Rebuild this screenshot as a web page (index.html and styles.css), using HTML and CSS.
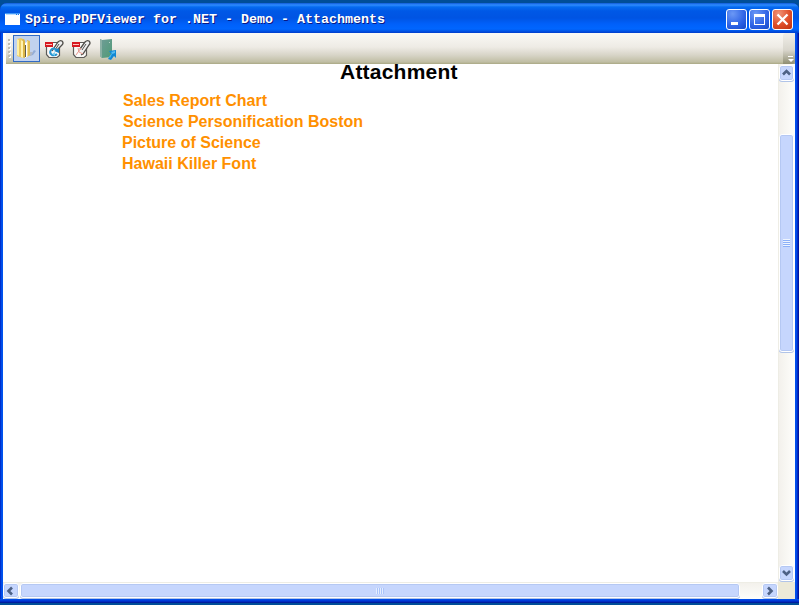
FILE: index.html
```
<!DOCTYPE html>
<html lang="en">
<head>
<meta charset="utf-8">
<title>Spire.PDFViewer for .NET - Demo - Attachments</title>
<link rel="stylesheet" href="styles.css">
</head>
<body>
<div class="window">
  <header class="titlebar">
    <svg class="app-icon" width="15" height="13" viewBox="0 0 15 13"><path fill="#fff" d="M0 0h15v12H0z"/><path fill="#4098f8" d="M0 0h15v1H0z"/><path fill="#b9dcff" d="M1 1h13v1H1z"/><path fill="#1675e8" d="M11 1h1v1h-1zM13 1h1v1h-1z"/></svg>
    <h1 class="title">Spire.PDFViewer for .NET - Demo - Attachments</h1>
    <div class="controls">
      <button class="control" aria-label="Minimize"><svg width="19" height="19"><path fill="#fff" d="M4 12h7v3H4z"/></svg></button>
      <button class="control" aria-label="Maximize"><svg width="19" height="19"><path fill="#fff" fill-rule="evenodd" d="M4 4h11v11H4zM5 7v7h9V7z"/></svg></button>
      <button class="control close" aria-label="Close"><svg width="19" height="19"><path stroke="#fff" stroke-width="2.3" d="M4.5 4.5l10 10M14.5 4.5l-10 10"/></svg></button>
    </div>
  </header>
  <div class="client">
    <div class="toolbar">
      <svg class="grip" width="4" height="20" viewBox="0 0 4 20"><g fill="#fff"><path d="M1 1h2v2H1zM1 5h2v2H1zM1 9h2v2H1zM1 13h2v2H1zM1 17h2v2H1z"/></g><g fill="#c0bdb2"><path d="M0 0h2v2H0zM0 4h2v2H0zM0 8h2v2H0zM0 12h2v2H0zM0 16h2v2H0z"/></g></svg>
      <button class="tool selected" aria-label="Open">
        <svg width="24" height="24" viewBox="0 0 24 24">
          <path fill="#93add8" d="M15 19l4-1 3-4-2-1-2 3h-3z"/><path fill="#b3b9c4" d="M15 15h4l-2 4h-2z"/>
          <path fill="#eccb64" d="M3 2l4-1 2 1v19l-6-2z"/><path fill="#fff0a5" d="M3 2l2 1v16l-2-1z"/>
          <path fill="#dcb647" d="M7 3l3-1 1 2v17l-4-1z"/><path fill="#fff2af" d="M7 3l2 1v17l-2-1z"/>
          <path fill="#fff" d="M11 6l2-1v15l-2 1z"/><path fill="#655d46" d="M11 8h1v12h-1z"/>
          <path fill="#e2bf58" d="M13 3l3 1v14l-3 2z"/><path fill="#fae28a" d="M13 4h1v16h-1z"/>
        </svg>
      </button>
      <button class="tool" aria-label="Save attachment">
        <svg width="20" height="20" viewBox="0 0 20 20">
          <path fill="#faf9f7" stroke="#5d5b58" stroke-width="1.200" d="M2.500 3.500v12l2.500 3h8l2.500-2v-13z"/>
          <path fill="#eee" stroke="#504e4a" stroke-width="1.300" d="M8 12l6-9q2-2 4-1 2 2 0 4l-5 5"/><path fill="none" stroke="#504e4a" d="M11 11l4-6"/>
          <path fill="#d71920" d="M1 3h8v5H1z"/><path fill="#ffc3bc" d="M2 5h6v1H2z"/>
          <path fill="none" stroke="#2795d0" stroke-width="2" d="M13 11q-4-3-6 0-2 3 1 5 3 1 5-1"/><path fill="#1686c8" d="M10 12l5-3v5z"/><path fill="#78cdf0" d="M8 15l3-2v4z"/>
        </svg>
      </button>
      <button class="tool" aria-label="Delete attachment">
        <svg width="20" height="20" viewBox="0 0 20 20">
          <path fill="#faf9f7" stroke="#5d5b58" stroke-width="1.200" d="M2.500 3.500v12l2.500 3h8l2.500-2v-13z"/>
          <path fill="#eee" stroke="#504e4a" stroke-width="1.300" d="M9 10l5-7q2-2 4-1 2 2 0 4l-6 9-2 1"/><path fill="none" stroke="#504e4a" d="M11 11l4-6"/>
          <path fill="#d71920" d="M1 3h8v5H1z"/><path fill="#ffc3bc" d="M2 5h6v1H2z"/>
          <path fill="none" stroke="#e8968d" d="M5 16l5-7M7 9l1 4 4 2"/>
        </svg>
      </button>
      <button class="tool" aria-label="Exit">
        <svg width="20" height="22" viewBox="0 0 20 22">
          <defs><linearGradient id="door" x2="1" y2="1"><stop stop-color="#719c98"/><stop offset="1" stop-color="#4f9b76"/></linearGradient></defs>
          <path fill="url(#door)" d="M2 1l2 1 10-1v18l-10 1-2-2z"/><path fill="#8cb0a5" d="M2 1l2 1v18l-2-2z"/><path fill="#b5d2c8" d="M11 4h1v1h-1z"/>
          <path fill="#1188d4" d="M11 13l7-1v8l-2-2-3 4-3-1 3-5z"/><path fill="#54bdf0" d="M13 14l4-1v2l-3 1-2 4-1-1 3-4z"/>
        </svg>
      </button>
      <span class="overflow"><svg width="7" height="8"><path fill="#fff" d="M1 1h5v1H1zM1 4h6L4 7z"/></svg></span>
    </div>
    <div class="viewer">
      <main class="page">
        <h2 class="heading">Attachment</h2>
        <ul class="attachments">
          <li>Sales Report Chart</li>
          <li>Science Personification Boston</li>
          <li class="outset">Picture of Science</li>
          <li class="outset">Hawaii Killer Font</li>
        </ul>
      </main>
      <div class="scroll vertical">
        <span class="arrow"><svg width="13" height="14"><path d="M3 8.500l3.500-3.500L10 8.500"/></svg></span>
        <span class="thumb"><i class="ridges"></i></span>
        <span class="arrow"><svg width="13" height="14"><path d="M3 5l3.500 3.500L10 5"/></svg></span>
      </div>
      <div class="scroll horizontal">
        <span class="arrow"><svg width="13" height="14"><path d="M8 3.500L4.500 7 8 10.500"/></svg></span>
        <span class="thumb"><i class="ridges"></i></span>
        <span class="arrow"><svg width="13" height="14"><path d="M5 3.500L8.500 7 5 10.500"/></svg></span>
      </div>
      <div class="corner"></div>
    </div>
  </div>
</div>
</body>
</html>
```

FILE: styles.css
```
* { box-sizing: border-box; }
body { margin: 0; width: 799px; height: 605px; padding-top: 3px; background: #004e98; overflow: hidden; }
button { margin: 0; padding: 0; border: 0; background: none; }
svg { display: block; }
.window { width: 799px; height: 600px; border-radius: 7px 7px 0 0; overflow: hidden; background: #0831d9; }
.titlebar { height: 30px; display: flex; align-items: center; padding: 2px 6px 0 5px; background: linear-gradient(#0f5bd8, #2f8cff 2px, #056bf0 4px, #0058e6 8px, #0054e3 15px, #0060fa 21px, #0066ff 26px, #0054e5 28px, #003dcb); }
.title { margin: 1px 0 0 5px; font: bold 13.330px/16px "Liberation Mono", monospace; color: #fff; text-shadow: 1px 1px #0a1883; white-space: pre; }
.controls { display: flex; gap: 2px; margin-left: auto; }
.control { width: 21px; height: 21px; border: 1px solid #fff; border-radius: 3px; background: radial-gradient(circle at 30% 20%, #6b98f5, #2d62e5 60%, #1549c8); }
.close { background: radial-gradient(circle at 30% 20%, #f09478, #df4d28 55%, #bd3210); }
.client { height: 567px; padding: 0 4px 1px 3px; height: 570px; background: linear-gradient(transparent 566px, #0054ec 566px, #0034d5 568px, #00138c), linear-gradient(90deg, #0020c0, #005cf5 2px, #0048e8 3px, transparent 3px, transparent 795px, #0052ef 795px, #0046e5 797px, #0014a0 798px); }
.toolbar { height: 31px; display: flex; align-items: center; padding-left: 5px; border-left: 3px solid #fff; background: linear-gradient(#faf9f5, #eeebe5 14px, #d8d5c8 22px, #c0bea4 29px, #a9a884) padding-box #fff; }
.grip { margin: 0 1px 0 -3px; }
.tool { width: 27px; height: 27px; display: grid; place-items: center; }
.tool svg { margin-left: -2px; }
.selected { border: 1px solid #316ac5; background: #c1d2ee; }
.selected + .tool { margin-left: 1px; }
.overflow { width: 12px; height: 31px; margin-left: auto; padding: 22px 0 0 4px; border-radius: 3px 0 3px 0; background: linear-gradient(#f1efe9, #d9d6cd 17px, #8f8e72); }
.viewer { height: 535px; display: grid; grid-template: 518px 17px / 775px 17px; background: #fff; }
.page { overflow: hidden; background: #fff; font-family: "Liberation Sans", Arial, sans-serif; font-weight: bold; }
.heading { margin: -4px 0 0 337px; font-size: 21px; letter-spacing: .22px; line-height: 24px; color: #000; }
.attachments { list-style: none; margin: 6px 0 0 120px; padding: 0; font-size: 16px; line-height: 21px; color: #ff9000; }
.outset { margin-left: -1px; }
.scroll { display: flex; }
.vertical { flex-direction: column; align-items: flex-start; border-left: 1px solid #eeede5; background: linear-gradient(90deg, #f3f1ec, #fefefb); padding: 1px 0; }
.horizontal { align-items: flex-start; border-top: 1px solid #eeede5; background: linear-gradient(#f3f1ec, #fefefb); padding: 0; }
.arrow, .thumb { flex: none; border: 1px solid #fff; border-radius: 3px; background: #c6d6fd; box-shadow: inset 0 0 0 1px #b5c8f3, 0 1px #b1c4e8; }
.arrow { width: 15px; height: 16px; }
.horizontal .arrow { width: 16px; height: 15px; }
.horizontal .arrow svg { margin-top: 0; }
.arrow path { fill: none; stroke: #4d6185; stroke-width: 2.600; }
.vertical .thumb { width: 15px; height: 218px; margin: 53px 0 auto; display: grid; place-items: center; }
.horizontal .thumb { width: 720px; height: 15px; margin: 0 auto 0 1px; display: grid; place-items: center; }
.ridges { width: 7px; height: 8px; background: repeating-linear-gradient(#eef4fe 0 1px, #8cb0f8 1px 2px); }
.horizontal .ridges { width: 8px; height: 6px; background: repeating-linear-gradient(90deg, #e4edff 0 1px, #aac4fa 1px 2px); }
.corner { background: #ece9d8; }
```
